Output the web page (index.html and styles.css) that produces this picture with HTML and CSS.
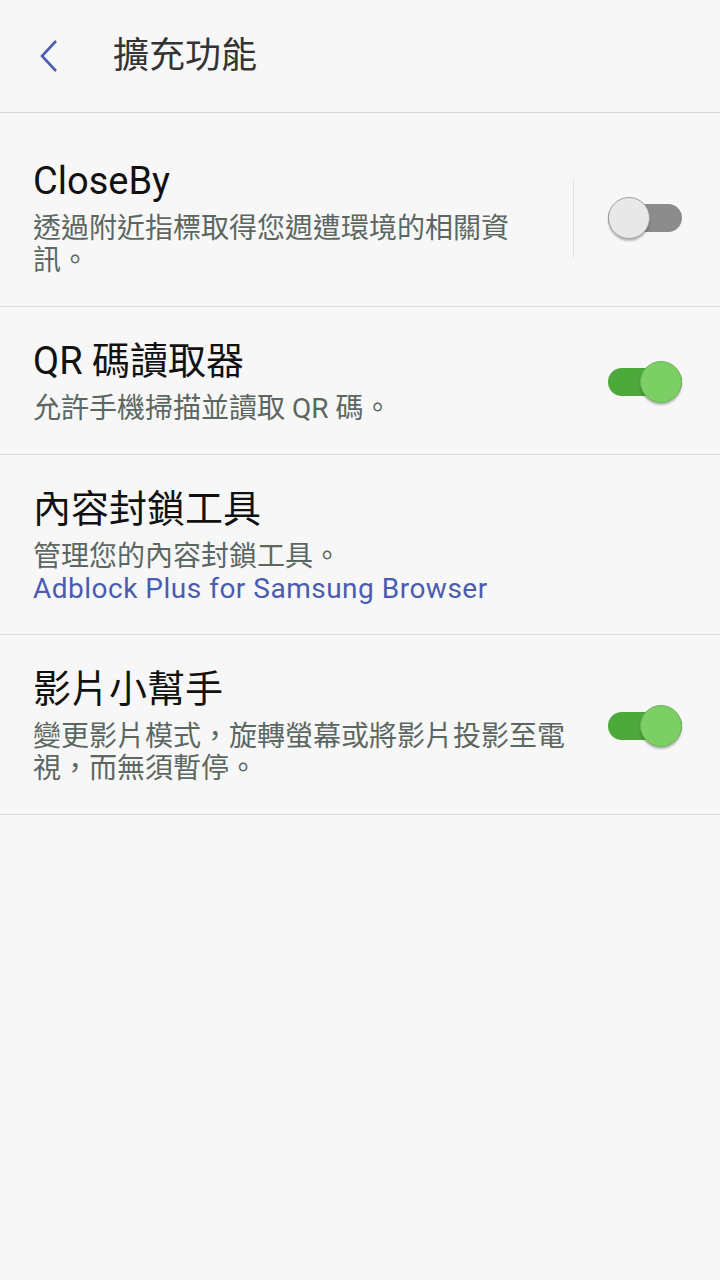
FILE: index.html
```html
<!DOCTYPE html>
<html lang="zh-Hant">
<head>
    <meta charset="UTF-8">
    <title>擴充功能</title>
    <link rel="stylesheet" href="styles.css">
</head>
<body>
<div class="header">
    <span class="back">
        <svg width="20" height="34" viewBox="0 0 20 34">
            <path d="M17 2 L3 17 L17 32" fill="none" stroke="#4a5cb4" stroke-width="2.6"/>
        </svg>
    </span>
    <h1>擴充功能</h1>
</div>

<div class="list">
    <div class="item">
        <div class="text">
            <div class="title">CloseBy</div>
            <div class="desc">透過附近指標取得您週遭環境的相關資訊。</div>
        </div>
        <div class="sep"></div>
        <span class="switch"><span class="thumb"></span></span>
    </div>
    <div class="item">
        <div class="text">
            <div class="title">QR 碼讀取器</div>
            <div class="desc">允許手機掃描並讀取 QR 碼。</div>
        </div>
        <span class="switch on"><span class="thumb"></span></span>
    </div>
    <div class="item">
        <div class="text">
            <div class="title">內容封鎖工具</div>
            <div class="desc">管理您的內容封鎖工具。</div>
            <div class="link">Adblock Plus for Samsung Browser</div>
        </div>
    </div>
    <div class="item">
        <div class="text">
            <div class="title">影片小幫手</div>
            <div class="desc">變更影片模式，旋轉螢幕或將影片投影至電視，而無須暫停。</div>
        </div>
        <span class="switch on"><span class="thumb"></span></span>
    </div>
</div>
</body>
</html>
```

FILE: styles.css
```css
body {
    margin: 0;
    padding: 0;
    background-color: #f7f7f7;
    font-family: Roboto, "Noto Sans CJK TC", sans-serif;
}

.header {
    height: 112px;
    display: flex;
    align-items: center;
    border-bottom: 1px solid #d6d6d6;
}

.back {
    width: 20px;
    height: 34px;
    margin-left: 39px;
    display: flex;
}

.header h1 {
    margin: 0 0 0 54px;
    font-size: 36px;
    font-weight: normal;
    color: #333;
    line-height: 46px;
}

.list {
    padding-top: 14px;
}

.item {
    display: flex;
    align-items: center;
    padding: 31px 38px 29px 33px;
    border-bottom: 1px solid #dcdcdc;
}

.text {
    flex: 1;
}

.title {
    font-size: 38px;
    line-height: 46px;
    color: #111;
}

.desc {
    margin-top: 9px;
    font-size: 28px;
    line-height: 32px;
    color: #5c6762;
}

.link {
    font-size: 28px;
    line-height: 32px;
    letter-spacing: 0.5px;
    color: #4a5cb1;
}

.sep {
    width: 1px;
    height: 80px;
    margin: 0 34px 0 40px;
    background-color: #e2e2e2;
}

.switch {
    position: relative;
    width: 74px;
    height: 42px;
    margin-left: 30px;
    flex-shrink: 0;
}

.sep + .switch {
    margin-left: 0;
}

.switch::before {
    content: "";
    position: absolute;
    left: 0;
    right: 0;
    top: 7px;
    height: 28px;
    border-radius: 14px;
    background-color: #8c8c8c;
}

.thumb {
    position: absolute;
    top: 0;
    left: 0;
    width: 40px;
    height: 40px;
    border-radius: 50%;
    background-color: #e8e8e8;
    border: 1px solid #a0a0a0;
    box-shadow: 0 2px 2px rgba(0, 0, 0, 0.25);
}

.switch.on::before {
    background-color: #4ca83a;
}

.switch.on .thumb {
    left: auto;
    right: 0;
    background-color: #7ccf64;
    border-color: #6ab456;
}
```
